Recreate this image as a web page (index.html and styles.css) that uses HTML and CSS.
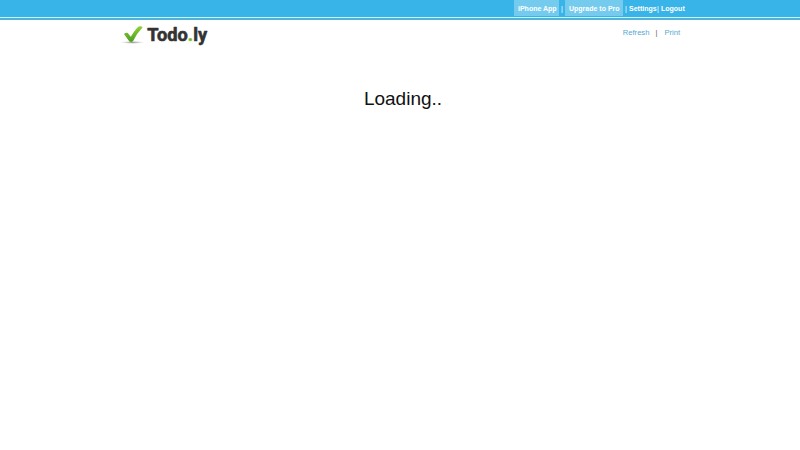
FILE: index.html
```html
<!DOCTYPE html>
<html lang="en">
<head>
<meta charset="utf-8">
<title>Todo.ly</title>
<link rel="stylesheet" href="styles.css">
</head>
<body>
<header class="topbar">
  <nav class="account">
    <a class="pill app">iPhone App</a><span class="sep first">|</span><a class="pill pro">Upgrade to Pro</a><span class="sep second">|</span><a class="settings">Settings</a><span class="sep third">|</span><a class="logout">Logout</a>
  </nav>
</header>
<div class="head">
  <svg class="logo" width="90" height="28" viewBox="0 0 90 28">
    <defs>
      <linearGradient id="green" x1="0" y1="0" x2="0" y2="1"><stop offset="0" stop-color="#8fd032"/><stop offset="1" stop-color="#4c9e20"/></linearGradient>
      <radialGradient id="shade"><stop offset="0" stop-color="#777" stop-opacity=".75"/><stop offset="1" stop-color="#999" stop-opacity="0"/></radialGradient>
    </defs>
    <ellipse cx="12.5" cy="20.4" rx="12" ry="1.5" fill="url(#shade)"/>
    <path d="M4 12 Q6 10.3 7.8 11 L10.8 14.8 Q15 7.8 18.7 4.6 Q21 3.7 22.7 5.2 Q17 11 13 19.2 Q11 20.8 9.2 19.2 Z" fill="url(#green)"/>
    <text class="wordmark" x="27.3" y="19.2" textLength="40.5" lengthAdjust="spacingAndGlyphs">Todo</text>
    <text class="wordmark dot" x="67.8" y="19.2">.</text>
    <text class="wordmark" x="73.2" y="19.2" textLength="14" lengthAdjust="spacingAndGlyphs">ly</text>
  </svg>
  <nav class="tools"><a class="refresh">Refresh</a><span class="divider">|</span><a class="print">Print</a></nav>
</div>
<main class="loading">Loading..</main>
</body>
</html>
```
FILE: styles.css
```css
body {
  margin: 0;
  background: #fff;
  font-family: "Liberation Sans", Arial, sans-serif;
}
.topbar {
  box-sizing: border-box;
  height: 20px;
  background: linear-gradient(#39b4e8 0 17px, #c5f5fc 17px 18.5px, #4fb3d9 18.5px 20px);
}
.account {
  display: flex;
  padding-left: 514px;
  height: 16px;
  line-height: 17px;
  font-size: 7px;
  font-weight: bold;
  color: #fff;
  white-space: nowrap;
}
.account a, .account .sep { flex: none; }
.pill {
  box-sizing: border-box;
  background: #75cbee;
  padding-left: 4px;
}
.app { width: 45px; }
.pro { width: 58px; }
.sep { font-weight: normal; }
.first { width: 4px; padding-left: 2px; }
.second { width: 4px; padding-left: 2px; }
.settings { width: 28px; }
.third { width: 4px; }
.head {
  display: flex;
  justify-content: space-between;
  height: 28px;
  margin: 2px 120px 0;
}
.logo { display: block; }
.wordmark {
  font: 700 18px Roboto, sans-serif;
  fill: #333;
  stroke: #333;
  stroke-width: .6px;
  stroke-linejoin: round;
}
.dot { fill: #75bd26; stroke: #75bd26; }
.tools {
  display: flex;
  padding-top: 6px;
  line-height: 9px;
  font-size: 7.6px;
  color: #55a9d3;
}
.divider { margin: 0 7px 0 6px; color: #666; }
.loading {
  margin-top: 38px;
  padding-left: 6px;
  text-align: center;
  font-size: 19px;
  line-height: 22px;
  color: #111;
}
```
